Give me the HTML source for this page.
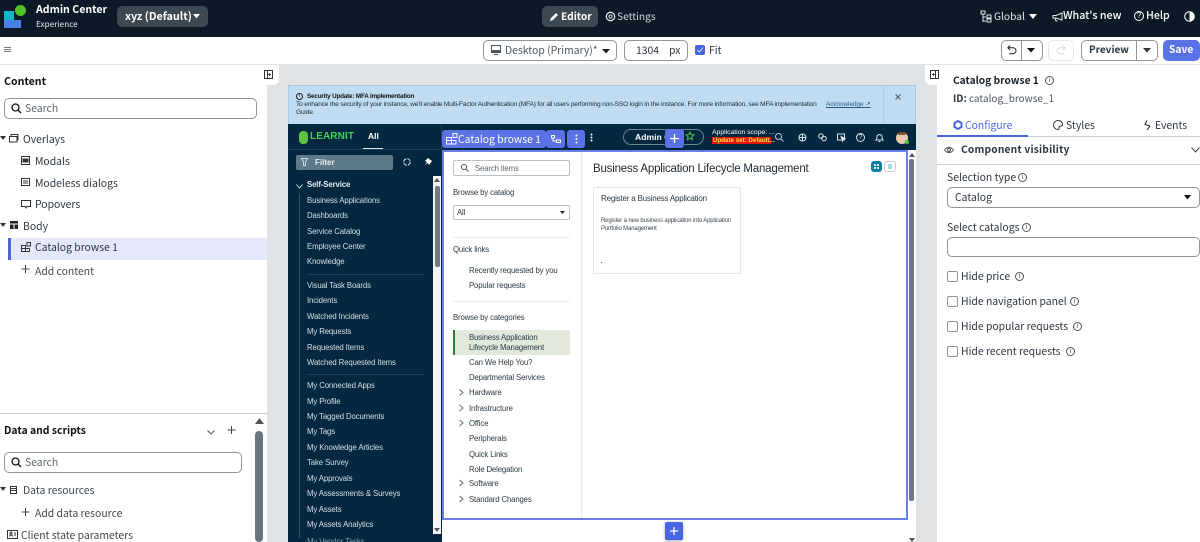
<!DOCTYPE html>
<html><head><meta charset="utf-8"><style>
html,body{margin:0;padding:0;width:1200px;height:542px;overflow:hidden;background:#fff}
body{position:relative;font-family:"Noto Sans CJK SC","Liberation Sans",sans-serif;color:#1f2a33}
.t{position:absolute;white-space:nowrap;line-height:20px;height:20px}
.b{position:absolute;box-sizing:border-box}
svg{position:absolute;overflow:visible}
.l{font-family:"Liberation Sans",sans-serif}
.n{font-family:"Liberation Sans",sans-serif;font-size:7.8px;letter-spacing:-.12px;color:#d4dfe6;position:absolute;white-space:nowrap;line-height:12px;left:307px;margin-top:1px}
.c{font-family:"Liberation Sans",sans-serif;font-size:7.8px;letter-spacing:-.15px;color:#2c3a44;position:absolute;white-space:nowrap;line-height:12px;left:469px;margin-top:1px}
.r{font-size:10.400px;color:#2b3640}
.ck{position:absolute;left:947px;width:11px;height:11px;border:1px solid #8b969e;border-radius:2px;box-sizing:border-box}
.i{position:absolute;width:9px;height:9px;border:1px solid #4a555e;border-radius:50%;box-sizing:border-box;font-size:7px;line-height:7px;text-align:center;color:#4a555e;font-family:"Liberation Sans",sans-serif}
</style></head><body>
<!-- top bar -->
<div class="b" style="left:0;top:0;width:1200px;height:37px;background:#0b1a26"></div>
<div class="b" style="left:4px;top:11px;width:10px;height:9px;background:#12b5c9"></div>
<div class="b" style="left:4px;top:20px;width:17px;height:8px;background:#4d7fe8"></div>
<div class="b" style="left:15px;top:5px;width:11px;height:11px;border-radius:50%;background:#52c22c"></div>
<div class="t" style="left:36px;top:0;font-size:10.600px;font-weight:700;color:#fff">Admin Center</div>
<div class="t" style="left:36px;top:14px;font-size:8.200px;color:#e6eaee">Experience</div>
<div class="b" style="left:117px;top:6px;width:91px;height:21px;background:#3c4852;border-radius:5px"></div>
<div class="t" style="left:125px;top:6px;font-size:10.800px;font-weight:700;color:#fff">xyz (Default)</div>
<svg style="left:193px;top:14px" width="8" height="5"><path d="M0 0h7L3.500 4.500z" fill="#fff"/></svg>
<div class="b" style="left:542px;top:6px;width:56px;height:21px;background:#3c4852;border-radius:5px"></div>
<svg style="left:549px;top:12px" width="10" height="10"><path d="M1 9l1-3 5-5 2 2-5 5z" fill="#fff"/></svg>
<div class="t" style="left:561px;top:6px;font-size:10.200px;font-weight:700;color:#fff">Editor</div>
<svg style="left:605px;top:11px" width="11" height="11"><circle cx="5.500" cy="5.500" r="4.200" fill="none" stroke="#dfe4e8" stroke-width="1.300"/><circle cx="5.500" cy="5.500" r="1.600" fill="none" stroke="#dfe4e8"/></svg>
<div class="t" style="left:617px;top:6px;font-size:10.200px;color:#cfd6dc">Settings</div>
<svg style="left:980px;top:10px" width="12" height="13" fill="none" stroke="#dfe4e8"><path d="M1 1h4v3H1zM3 4v8M3 7h3M3 11h3M7 5h4v3H7zM7 9h4v3H7z"/></svg>
<div class="t" style="left:994px;top:6px;font-size:10.200px;color:#e6eaee">Global</div>
<svg style="left:1029px;top:14px" width="8" height="5"><path d="M0 0h8L4 5z" fill="#fff"/></svg>
<svg style="left:1052px;top:12px" width="11" height="10" fill="none" stroke="#e6eaee"><path d="M1 3.500h3L10 1v7L4 6H1zM3 6l1 3h1.500"/></svg>
<div class="t" style="left:1063px;top:6px;font-size:10.700px;font-weight:500;color:#fff">What's new</div>
<div class="b" style="left:1134px;top:11px;width:10px;height:10px;border:1px solid #fff;border-radius:50%;font:8px/8px 'Liberation Sans';text-align:center;color:#fff">?</div>
<div class="t" style="left:1146px;top:6px;font-size:10.600px;font-weight:500;color:#fff">Help</div>
<svg style="left:1184px;top:11px" width="11" height="11"><circle cx="5.500" cy="5.500" r="4.800" fill="none" stroke="#fff"/><path d="M5.500.7a4.800 4.800 0 0 1 0 9.600z" fill="#fff"/></svg>

<!-- toolbar -->
<div class="b" style="left:0;top:64px;width:1200px;height:1px;background:#dfe3e6"></div>
<svg style="left:4px;top:47px" width="8" height="6" stroke="#6d7880"><path d="M0 .5h7M0 2.500h7M0 4.500h7"/></svg>
<div class="b" style="left:483px;top:40px;width:134px;height:21px;border:1px solid #8b969e;border-radius:5px"></div>
<svg style="left:491px;top:45px" width="11" height="11" fill="none" stroke="#4a555e"><path d="M.5.500h9v7h-9z"/><path d="M.5 5.500h9V7.500h-9zM3 9.500h4" fill="#4a555e"/></svg>
<div class="t" style="left:505px;top:40px;font-size:10.400px;color:#4a555e">Desktop (Primary)*</div>
<svg style="left:602px;top:49px" width="8" height="5"><path d="M0 0h8L4 4.500z" fill="#222"/></svg>
<div class="b" style="left:624px;top:40px;width:64px;height:21px;border:1px solid #8b969e;border-radius:5px"></div>
<div class="t" style="left:636px;top:40px;font-size:10.400px;color:#2b3640">1304</div>
<div class="t" style="left:669px;top:40px;font-size:10.400px;color:#2b3640">px</div>
<div class="b" style="left:695px;top:45px;width:10px;height:10px;background:#4a64e0;border-radius:2px"></div>
<svg style="left:697px;top:47px" width="7" height="6" fill="none" stroke="#dfe6ff"><path d="M.5 3l2 2L6 .5"/></svg>
<div class="t" style="left:709px;top:40px;font-size:10.400px;color:#2b3640">Fit</div>
<div class="b" style="left:1001px;top:40px;width:42px;height:21px;border:1px solid #8b969e;border-radius:5px"></div>
<div class="b" style="left:1021px;top:41px;width:1px;height:19px;background:#8b969e"></div>
<svg style="left:1007px;top:45px" width="10" height="10" fill="none" stroke="#222"><path d="M3 .5L.8 2.700 3 5M1 2.700h5a3 3 0 0 1 0 6H2"/></svg>
<svg style="left:1027px;top:48px" width="9" height="5"><path d="M0 0h8L4 4.500z" fill="#111"/></svg>
<div class="b" style="left:1048px;top:40px;width:26px;height:21px;border:1px solid #e6e9eb;border-radius:5px"></div>
<svg style="left:1056px;top:45px" width="10" height="10" fill="none" stroke="#d5d9dc"><path d="M7 .5l2.200 2.200L7 5M9 2.700H4a3 3 0 0 0 0 6h4"/></svg>
<div class="b" style="left:1081px;top:40px;width:77px;height:21px;border:1px solid #8b969e;border-radius:5px"></div>
<div class="b" style="left:1136px;top:41px;width:1px;height:19px;background:#8b969e"></div>
<div class="t" style="left:1089px;top:39px;font-size:10px;font-weight:700;color:#2b3640">Preview</div>
<svg style="left:1143px;top:48px" width="9" height="5"><path d="M0 0h8L4 4.500z" fill="#333"/></svg>
<div class="b" style="left:1163px;top:40px;width:37px;height:21px;background:#5a72e6;border-radius:5px"></div>
<div class="t" style="left:1169px;top:39px;font-size:10.300px;font-weight:700;color:#fff">Save</div>

<!-- canvas -->
<div class="b" style="left:267px;top:65px;width:670px;height:477px;background:#e0e3e6"></div>
<div class="b" style="left:259px;top:65px;width:20px;height:20px;background:#fff;border-radius:0 0 6px 6px"></div>
<svg style="left:264px;top:70px" width="10" height="10" fill="none" stroke="#333"><path d="M.5.500h8v8h-8zM3.500.500v8M7 4.500H5M5.800 3.300L4.800 4.500l1 1.200"/></svg>

<!-- left panel -->
<div class="t" style="left:4px;top:72px;font-size:10.600px;font-weight:700;color:#111">Content</div>
<div class="b" style="left:4px;top:98px;width:253px;height:21px;border:1px solid #8b969e;border-radius:5px"></div>
<svg style="left:11px;top:103px" width="11" height="11" fill="none" stroke="#111" stroke-width="1.300"><circle cx="4.500" cy="4.500" r="3.500"/><path d="M7 7l3 3"/></svg>
<div class="t" style="left:25px;top:98px;font-size:10.400px;color:#5d6870">Search</div>
<svg style="left:0;top:136px" width="6" height="5"><path d="M0 0h6L3 4z" fill="#333"/></svg>
<svg style="left:9px;top:134px" width="10" height="9" fill="none" stroke="#333"><path d="M2 2V.5h7V6H8M.5 2.500h7.500V8H.5z"/></svg>
<div class="t" style="left:23px;top:129px;font-size:10.400px;color:#2b3640">Overlays</div>
<svg style="left:21px;top:156px" width="10" height="10" fill="none" stroke="#333"><path d="M.5.500h8v8h-8z"/><path d="M2 3h5v3H2z" fill="#333"/></svg>
<div class="t" style="left:35px;top:151px;font-size:10.400px;color:#2b3640">Modals</div>
<svg style="left:21px;top:178px" width="10" height="9" fill="none" stroke="#333"><path d="M.5.500h8v7h-8zM2 3h5M2 5h5"/></svg>
<div class="t" style="left:35px;top:173px;font-size:10.400px;color:#2b3640">Modeless dialogs</div>
<svg style="left:21px;top:200px" width="10" height="9" fill="none" stroke="#333"><path d="M.5.500h9v6H6L5 8 4 6.500H.5z"/></svg>
<div class="t" style="left:35px;top:194px;font-size:10.400px;color:#2b3640">Popovers</div>
<svg style="left:0;top:223px" width="6" height="5"><path d="M0 0h6L3 4z" fill="#333"/></svg>
<svg style="left:10px;top:221px" width="8" height="8" fill="#222"><path d="M0 0h8v2.500H0zM0 3.500h3.500V8H0zM4.500 3.500H8V8H4.500z"/></svg>
<div class="t" style="left:23px;top:216px;font-size:10.400px;color:#2b3640">Body</div>
<div class="b" style="left:8px;top:238px;width:259px;height:22px;background:#e4e8fa"></div>
<div class="b" style="left:8px;top:238px;width:3px;height:22px;background:#4a64e0"></div>
<svg style="left:21px;top:242px" width="10" height="11" fill="none" stroke="#333"><path d="M.5 3.500h4v6h-4zM.5 6.500h8M4.500 6.500v3h4v-3M6 .5h3.500V4H6z"/></svg>
<div class="t" style="left:35px;top:237px;font-size:10.400px;color:#2b3640">Catalog browse 1</div>
<svg style="left:21px;top:265px" width="9" height="9" stroke="#444"><path d="M4.500 0v8M.5 4h8"/></svg>
<div class="t" style="left:35px;top:261px;font-size:10.400px;color:#3d4850">Add content</div>

<div class="b" style="left:0;top:413px;width:267px;height:1px;background:#c8cdd1"></div>
<div class="t" style="left:4px;top:420px;font-size:10.400px;font-weight:700;color:#111">Data and scripts</div>
<svg style="left:207px;top:430px" width="8" height="5" fill="none" stroke="#555"><path d="M.5.500L4 4 7.500.5"/></svg>
<svg style="left:227px;top:426px" width="9" height="9" stroke="#444"><path d="M4.500 0v8M.5 4h8"/></svg>
<div class="b" style="left:4px;top:452px;width:238px;height:21px;border:1px solid #8b969e;border-radius:5px"></div>
<svg style="left:11px;top:457px" width="11" height="11" fill="none" stroke="#111" stroke-width="1.300"><circle cx="4.500" cy="4.500" r="3.500"/><path d="M7 7l3 3"/></svg>
<div class="t" style="left:25px;top:452px;font-size:10.400px;color:#5d6870">Search</div>
<svg style="left:0;top:487px" width="6" height="5"><path d="M0 0h6L3 4z" fill="#333"/></svg>
<svg style="left:10px;top:485px" width="8" height="10" fill="none" stroke="#333"><path d="M.5 1.500h6v7h-6zM.5 3.500h6M.5 5.500h6"/></svg>
<div class="t" style="left:23px;top:480px;font-size:10.400px;color:#3d4850">Data resources</div>
<svg style="left:21px;top:508px" width="9" height="9" stroke="#444"><path d="M4.500 0v8M.5 4h8"/></svg>
<div class="t" style="left:35px;top:503px;font-size:10.400px;color:#3d4850">Add data resource</div>
<svg style="left:7px;top:530px" width="11" height="10" fill="none" stroke="#333"><path d="M.5.500h10v8H.5zM2.500 6.500c0-2 3-2 3 0M7 3h2M7 5h2"/><circle cx="4" cy="3" r="1"/></svg>
<div class="t" style="left:21px;top:525px;font-size:10.400px;color:#3d4850">Client state parameters</div>
<svg style="left:255px;top:418px" width="9" height="6"><path d="M0 6h9L4.500 0z" fill="#555"/></svg>
<div class="b" style="left:255px;top:431px;width:8px;height:111px;background:#6a747c;border-radius:4px"></div>

<!-- preview frame -->
<div class="b" style="left:288px;top:85px;width:628px;height:457px;background:#fff"></div>
<div class="b" style="left:288px;top:85px;width:628px;height:39px;background:#bfdcf2;border:1px solid #a5c9e8;border-bottom:0"></div>
<div class="b" style="left:883px;top:85px;width:1px;height:39px;background:#a9cde9"></div>
<div class="b" style="left:296px;top:93px;width:7px;height:7px;border:1px solid #222;border-radius:50%;font:5px/5px 'Liberation Sans';text-align:center;color:#222">i</div>
<div class="t l" style="left:307px;top:87px;font-size:6.300px;letter-spacing:-.17px;font-weight:700;color:#111">Security Update: MFA Implementation</div>
<div class="t l" style="left:296px;top:95px;font-size:6.600px;letter-spacing:-.18px;color:#1d2a33">To enhance the security of your instance, we'll enable Multi-Factor Authentication (MFA) for all users performing non-SSO login in the instance. For more information, see MFA implementation</div>
<div class="t l" style="left:296px;top:103px;font-size:6.600px;letter-spacing:-.18px;color:#1d2a33">Guide.</div>
<div class="t l" style="left:826px;top:95px;font-size:6.300px;color:#2c5a8c;text-decoration:underline">Acknowledge ↗</div>
<svg style="left:895px;top:94px" width="6" height="6" stroke="#4a5a66"><path d="M.5.500l5 5M5.500.500l-5 5"/></svg>

<!-- SN nav -->
<div class="b" style="left:288px;top:124px;width:628px;height:26px;background:#03283f"></div>
<div class="b" style="left:299px;top:131px;width:9px;height:13px;background:#5ec13f;border-radius:4px"></div>
<div class="t l" style="left:310px;top:127px;font-size:10px;font-weight:700;color:#3fd24a;letter-spacing:.1px">LEARNIT</div>
<div class="t l" style="left:368px;top:126px;font-size:8.500px;font-weight:700;color:#fff">All</div>
<div class="b" style="left:363px;top:148px;width:20px;height:2px;background:#dfe6ea"></div>
<div class="b" style="left:441px;top:124px;width:1px;height:26px;background:#1b4058"></div>
<div class="b" style="left:288px;top:149px;width:154px;height:1px;background:#1b4058"></div>
<div class="b" style="left:623px;top:129px;width:81px;height:16px;border:1px solid #6f8694;border-radius:8px"></div>
<div class="t l" style="left:635px;top:127px;font-size:8.600px;font-weight:700;color:#fff">Admin C</div>
<svg style="left:685px;top:131px" width="10" height="10" fill="none" stroke="#4dc24a"><path d="M5 1l1.200 2.600 2.800.3-2.100 1.900.6 2.800L5 7.200 2.500 8.600l.6-2.800L1 3.900l2.800-.3z"/></svg>
<div class="t l" style="left:712px;top:123px;font-size:6.800px;color:#fff">Application scope: ...</div>
<div class="b" style="left:712px;top:137px;width:59px;height:7px;background:#e8120c"></div>
<div class="t l" style="left:713px;top:131px;font-size:6.200px;color:#ffe23a;font-weight:700">Update set: Default...</div>
<svg style="left:775px;top:133px" width="9" height="9" fill="none" stroke="#b8c6cf"><circle cx="3.500" cy="3.500" r="3"/><path d="M6 6l2.500 2.500"/></svg>
<svg style="left:798px;top:133px" width="9" height="9" fill="none" stroke="#dbe3e8"><circle cx="4.500" cy="4.500" r="3.500"/><path d="M1 4.500h7M4.500 1v7"/></svg>
<svg style="left:818px;top:133px" width="9" height="9" fill="none" stroke="#dbe3e8"><circle cx="3" cy="3" r="2.300"/><circle cx="6" cy="5.500" r="2.300"/></svg>
<svg style="left:837px;top:133px" width="9" height="9" fill="none" stroke="#dbe3e8"><path d="M.5 1h7v6h-7z"/><path d="M4 3.500l4 2-2 .5-.5 2z" fill="#fff"/></svg>
<div class="b" style="left:856px;top:133px;width:9px;height:9px;border:1px solid #dbe3e8;border-radius:50%;font:7px/7px 'Liberation Sans';text-align:center;color:#dbe3e8">?</div>
<svg style="left:875px;top:133px" width="9" height="9" fill="none" stroke="#dbe3e8"><path d="M1 7c1-1 1-2 1-3.500C2 1 7 1 7 3.500 7 5 7 6 8 7zM3.500 8.500h2"/></svg>
<div class="b" style="left:896px;top:132px;width:12px;height:12px;border-radius:50%;background:#eac9ae"></div>
<div class="b" style="left:898px;top:132px;width:8px;height:3px;background:#7a5336;border-radius:3px"></div>
<div class="b" style="left:905px;top:140px;width:4px;height:4px;border-radius:50%;background:#4dc24a"></div>

<!-- sidebar -->
<div class="b" style="left:288px;top:150px;width:154px;height:392px;background:#03283f"></div>
<div class="b" style="left:296px;top:155px;width:97px;height:15px;background:#5d7a89;border-radius:2px"></div>
<svg style="left:301px;top:158px" width="8" height="9" fill="none" stroke="#cfd9df"><path d="M.5.500h6L4.500 4v3.500h-2V4z"/></svg>
<div class="t l" style="left:315px;top:153px;font-size:8px;color:#e6ecef;font-weight:700;line-height:20px">Filter</div>
<svg style="left:403px;top:158px" width="8" height="8" fill="none" stroke="#dbe3e8"><circle cx="4" cy="4" r="3.200" stroke-dasharray="4 1"/></svg>
<svg style="left:424px;top:158px" width="8" height="8" fill="#fff"><path d="M4 0l4 3-3 4-1-2-3 2 2-3-2-1z"/></svg>
<svg style="left:296px;top:184px" width="7" height="5" fill="none" stroke="#b8c6cf"><path d="M.5.500L3.500 4 6.500.5"/></svg>
<div class="n" style="left:307px;top:178px;font-weight:700;color:#e6ecef">Self-Service</div>
<div class="b" style="left:299px;top:193px;width:1px;height:345px;background:#345266"></div>
<div class="n" style="top:194px">Business Applications</div>
<div class="n" style="top:209px">Dashboards</div>
<div class="n" style="top:225px">Service Catalog</div>
<div class="n" style="top:240px">Employee Center</div>
<div class="n" style="top:255px">Knowledge</div>
<div class="b" style="left:307px;top:274px;width:117px;height:1px;background:#1e4359"></div>
<div class="n" style="top:279px">Visual Task Boards</div>
<div class="n" style="top:294px">Incidents</div>
<div class="n" style="top:310px">Watched Incidents</div>
<div class="n" style="top:325px">My Requests</div>
<div class="n" style="top:341px">Requested Items</div>
<div class="n" style="top:356px">Watched Requested Items</div>
<div class="b" style="left:307px;top:374px;width:117px;height:1px;background:#1e4359"></div>
<div class="n" style="top:379px">My Connected Apps</div>
<div class="n" style="top:395px">My Profile</div>
<div class="n" style="top:410px">My Tagged Documents</div>
<div class="n" style="top:425px">My Tags</div>
<div class="n" style="top:441px">My Knowledge Articles</div>
<div class="n" style="top:456px">Take Survey</div>
<div class="n" style="top:472px">My Approvals</div>
<div class="n" style="top:487px">My Assessments &amp; Surveys</div>
<div class="n" style="top:503px">My Assets</div>
<div class="n" style="top:518px">My Assets Analytics</div>
<div class="n" style="top:535px;opacity:.6">My Vendor Tasks</div>
<div class="b" style="left:433px;top:176px;width:8px;height:358px;background:#f3f4f5"></div>
<svg style="left:434px;top:178px" width="6" height="4"><path d="M0 4h6L3 0z" fill="#555"/></svg>
<div class="b" style="left:435px;top:186px;width:5px;height:81px;background:#6f7a82;border-radius:2px"></div>
<svg style="left:434px;top:528px" width="6" height="4"><path d="M0 0h6L3 4z" fill="#555"/></svg>

<!-- main content -->
<div class="b" style="left:442px;top:150px;width:466px;height:370px;background:#fff;border:2px solid #6a80e8"></div>
<div class="b" style="left:581px;top:152px;width:1px;height:366px;background:#e8ecee"></div>
<div class="b" style="left:908px;top:150px;width:8px;height:392px;background:#fff"></div>
<svg style="left:909px;top:153px" width="6" height="4"><path d="M0 4h6L3 0z" fill="#555"/></svg>
<div class="b" style="left:909px;top:159px;width:5px;height:342px;background:#6f7a82;border-radius:2px"></div>
<svg style="left:909px;top:538px" width="6" height="4"><path d="M0 0h6L3 4z" fill="#555"/></svg>

<div class="b" style="left:453px;top:160px;width:117px;height:16px;border:1px solid #b9c1c6;border-radius:2px"></div>
<svg style="left:461px;top:164px" width="8" height="8" fill="none" stroke="#555"><circle cx="3" cy="3" r="2.500"/><path d="M5 5l2.500 2.500"/></svg>
<div class="c" style="left:475px;top:162px;color:#5d6870">Search items</div>
<div class="c" style="left:453px;top:186px;color:#2c3a44">Browse by catalog</div>
<div class="b" style="left:453px;top:205px;width:117px;height:15px;border:1px solid #b9c1c6;border-radius:2px"></div>
<div class="c" style="left:457px;top:206px">All</div>
<svg style="left:560px;top:211px" width="5" height="3"><path d="M0 0h5L2.500 3z" fill="#222"/></svg>
<div class="b" style="left:453px;top:237px;width:117px;height:1px;background:#e8ecee"></div>
<div class="c" style="left:453px;top:243px">Quick links</div>
<div class="c" style="top:264px">Recently requested by you</div>
<div class="c" style="top:279px">Popular requests</div>
<div class="b" style="left:453px;top:301px;width:117px;height:1px;background:#e8ecee"></div>
<div class="c" style="left:453px;top:311px">Browse by categories</div>
<div class="b" style="left:453px;top:330px;width:117px;height:25px;background:#e1e9dd"></div>
<div class="b" style="left:453px;top:330px;width:2px;height:25px;background:#2e7a2e"></div>
<div class="c" style="top:331px">Business Application</div>
<div class="c" style="top:341px">Lifecycle Management</div>
<div class="c" style="top:356px">Can We Help You?</div>
<div class="c" style="top:371px">Departmental Services</div>
<div class="c" style="top:386px">Hardware</div>
<div class="c" style="top:402px">Infrastructure</div>
<div class="c" style="top:417px">Office</div>
<div class="c" style="top:432px">Peripherals</div>
<div class="c" style="top:448px">Quick Links</div>
<div class="c" style="top:463px">Role Delegation</div>
<div class="c" style="top:477px">Software</div>
<div class="c" style="top:493px">Standard Changes</div>
<svg style="left:459px;top:389px" width="5" height="115" fill="none" stroke="#667"><path d="M.5.500L4 3.500.5 6.500M.5 16L4 19 .5 22M.5 31L4 34 .5 37M.5 91L4 94 .5 97M.5 107L4 110 .5 113"/></svg>

<div class="t l" style="left:593px;top:159px;font-size:11.500px;letter-spacing:-.2px;color:#1f2a33">Business Application Lifecycle Management</div>
<div class="b" style="left:871px;top:161px;width:11px;height:11px;background:#0f7ea3;border-radius:3px"></div>
<svg style="left:874px;top:164px" width="5" height="5" fill="#d8eef6"><path d="M0 0h2v2H0zM3 0h2v2H3zM0 3h2v2H0zM3 3h2v2H3z"/></svg>
<div class="b" style="left:884px;top:161px;width:12px;height:11px;border:1px solid #c4ccd1;border-radius:3px"></div>
<div class="b" style="left:888px;top:164px;width:4px;height:5px;background:#a9d6e8"></div>
<div class="b" style="left:593px;top:187px;width:148px;height:87px;border:1px solid #e3e7e9;border-radius:2px;background:#fff"></div>
<div class="t l" style="left:601px;top:189px;font-size:8px;letter-spacing:-.2px;color:#2c3a44">Register a Business Application</div>
<div class="t l" style="left:601px;top:211px;font-size:6px;letter-spacing:-.15px;color:#3a464f">Register a new business application into Application</div>
<div class="t l" style="left:601px;top:219px;font-size:6px;letter-spacing:-.15px;color:#3a464f">Portfolio Management</div>
<div class="b" style="left:601px;top:262px;width:1px;height:1px;background:#555"></div>

<!-- selection chrome -->
<div class="b" style="left:442px;top:130px;width:104px;height:18px;background:#5a72e6;border-radius:3px"></div>
<svg style="left:446px;top:133px" width="12" height="12" fill="none" stroke="#fff"><path d="M.5 4.500h5v6.500h-5zM.5 7.500h9.500M5.500 7.500V11H10V7.500M7 .5h4v4H7z"/></svg>
<div class="t" style="left:458px;top:129px;font-size:10.400px;color:#fff">Catalog browse 1</div>
<div class="b" style="left:546px;top:130px;width:19px;height:18px;background:#5a72e6;border-radius:3px"></div>
<svg style="left:551px;top:135px" width="10" height="9" fill="none" stroke="#fff"><path d="M.5.500h3v2.500h-3zM5.500 5h4v2.500h-4zM2 3v3h3.500"/></svg>
<div class="b" style="left:567px;top:130px;width:18px;height:18px;background:#5a72e6;border-radius:3px"></div>
<svg style="left:575px;top:134px" width="3" height="10" fill="#fff"><circle cx="1.500" cy="1.500" r="1"/><circle cx="1.500" cy="5" r="1"/><circle cx="1.500" cy="8.500" r="1"/></svg>
<svg style="left:590px;top:133px" width="3" height="10" fill="#fff"><circle cx="1.500" cy="1.500" r="1"/><circle cx="1.500" cy="4.500" r="1"/><circle cx="1.500" cy="7.500" r="1"/></svg>
<div class="b" style="left:665px;top:129px;width:19px;height:19px;background:#5a72e6;border-radius:3px;box-shadow:0 1px 3px rgba(0,0,0,.35)"></div>
<svg style="left:670px;top:134px" width="9" height="9" stroke="#fff" stroke-width="1.300"><path d="M4.500 0v9M0 4.500h9"/></svg>
<div class="b" style="left:665px;top:522px;width:18px;height:18px;background:#4a64e6;border-radius:2px;box-shadow:0 1px 3px rgba(0,0,0,.35)"></div>
<svg style="left:670px;top:527px" width="8" height="8" stroke="#fff" stroke-width="1.300"><path d="M4 0v8M0 4h8"/></svg>

<!-- right panel -->
<div class="b" style="left:937px;top:65px;width:263px;height:477px;background:#fff"></div>
<div class="b" style="left:925px;top:65px;width:20px;height:20px;background:#fff;border-radius:0 0 6px 6px"></div>
<svg style="left:930px;top:70px" width="10" height="10" fill="none" stroke="#333"><path d="M.5.500h8v8h-8zM5.500.500v8M2 4.500h2M3.200 3.300l1 1.200-1 1.200"/></svg>
<div class="t" style="left:953px;top:70px;font-size:10.200px;font-weight:700;color:#1b242b">Catalog browse 1</div>
<div class="i" style="left:1045px;top:76px">i</div>
<div class="t" style="left:953px;top:88px;font-size:10px;color:#4a555e"><b style="color:#2b3640">ID:</b> catalog_browse_1</div>
<svg style="left:953px;top:120px" width="10" height="10" fill="none" stroke="#4a64e0" stroke-width="2"><path d="M5 1l3.500 2v4L5 9 1.500 7V3z"/></svg>
<div class="t" style="left:965px;top:115px;font-size:10.400px;color:#4a64e0">Configure</div>
<svg style="left:1053px;top:120px" width="10" height="10" fill="none" stroke="#333"><path d="M5 .5a4.500 4.500 0 1 0 0 9c1.500 0 1-1.500 1-2.200 0-1 1-1.300 1.800-1.300 1.700 0 1.700-1 1.700-1.500C9.500 2 7.500.5 5 .5z"/></svg>
<div class="t" style="left:1066px;top:115px;font-size:10.400px;color:#2b3640">Styles</div>
<svg style="left:1144px;top:120px" width="8" height="11" fill="none" stroke="#222"><path d="M3 .5L1 4.500l5 1.500-3 4"/></svg>
<div class="t" style="left:1155px;top:115px;font-size:10.400px;color:#2b3640">Events</div>
<div class="b" style="left:937px;top:136px;width:263px;height:1px;background:#c8cdd1"></div>
<div class="b" style="left:937px;top:135px;width:91px;height:2px;background:#4a64e0"></div>
<svg style="left:944px;top:146px" width="10" height="8" fill="none" stroke="#555"><path d="M.5 4C3 .5 7 .5 9.500 4 7 7.500 3 7.500.5 4z"/><circle cx="5" cy="4" r="1.500"/></svg>
<div class="t" style="left:961px;top:139px;font-size:10.200px;font-weight:700;color:#2b3640;letter-spacing:.2px">Component visibility</div>
<svg style="left:1191px;top:147px" width="9" height="6" fill="none" stroke="#444"><path d="M.5.500L4.500 5 8.500.5"/></svg>
<div class="b" style="left:937px;top:164px;width:263px;height:1px;background:#c8cdd1"></div>
<div class="t r" style="left:947px;top:167px">Selection type</div>
<div class="i" style="left:1018px;top:173px">i</div>
<div class="b" style="left:947px;top:187px;width:253px;height:21px;border:1px solid #8b969e;border-radius:5px"></div>
<div class="t r" style="left:955px;top:187px">Catalog</div>
<svg style="left:1184px;top:195px" width="8" height="5"><path d="M0 0h7L3.500 4.500z" fill="#111"/></svg>
<div class="t r" style="left:947px;top:217px">Select catalogs</div>
<div class="i" style="left:1022px;top:223px">i</div>
<div class="b" style="left:947px;top:237px;width:253px;height:20px;border:1px solid #8b969e;border-radius:5px"></div>
<div class="ck" style="top:271px"></div><div class="t r" style="left:961px;top:266px">Hide price</div><div class="i" style="left:1015px;top:272px">i</div>
<div class="ck" style="top:296px"></div><div class="t r" style="left:961px;top:291px">Hide navigation panel</div><div class="i" style="left:1070px;top:297px">i</div>
<div class="ck" style="top:321px"></div><div class="t r" style="left:961px;top:316px">Hide popular requests</div><div class="i" style="left:1073px;top:322px">i</div>
<div class="ck" style="top:346px"></div><div class="t r" style="left:961px;top:341px">Hide recent requests</div><div class="i" style="left:1066px;top:347px">i</div>
</body></html>
